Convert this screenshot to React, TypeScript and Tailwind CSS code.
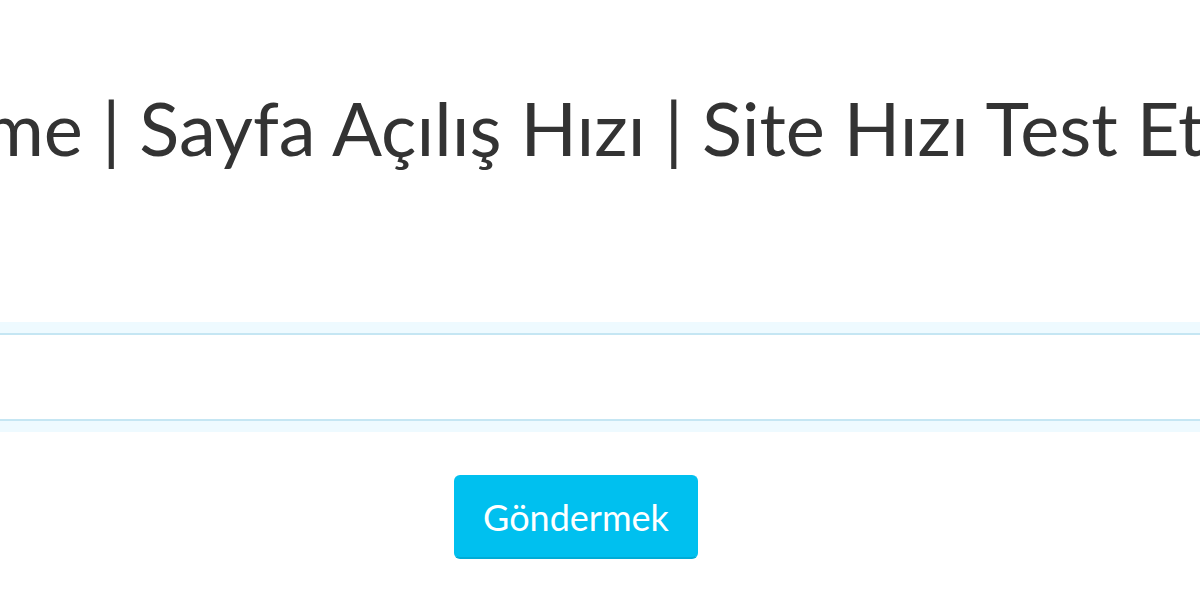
export default function App() {
  return (
    <main className="h-[600px] w-full overflow-hidden bg-white font-['Lato',sans-serif] text-[#333]">

      {/* BAŞLIK */}
      <div className="flex justify-center pt-[83px] pr-6">
        <h1 className="shrink-0 whitespace-nowrap text-[74px] font-normal leading-[90px]">
          Ölçme | Sayfa Açılış Hızı | Site Hızı Test Etme
        </h1>
      </div>

      {/* URL ALANI */}
      <form className="mt-[148px]" onSubmit={(e) => e.preventDefault()}>
        <div className="overflow-hidden py-3">
          <input
            type="text"
            className="-mx-6 block h-[88px] w-[calc(100%+48px)] border-2 border-[#c5e6f3] bg-white px-6 text-[36px] outline-none shadow-[0_0_0_11px_#eefaff]"
          />
        </div>

        <div className="mt-[42px] flex justify-center pr-12">
          <button
            type="submit"
            className="h-[84px] w-[244px] rounded-[6px] border-2 border-[#00c0ef] border-b-[#00acd6] bg-[#00c0ef] text-[36px] text-white"
          >
            Göndermek
          </button>
        </div>
      </form>

    </main>
  );
}
